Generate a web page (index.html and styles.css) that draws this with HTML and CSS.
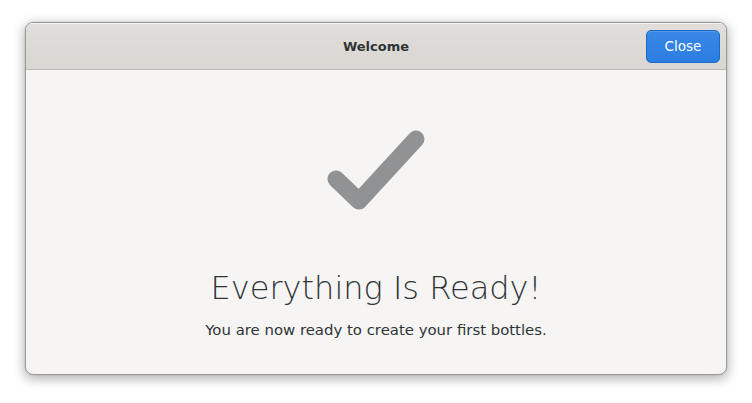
FILE: index.html
```html
<!DOCTYPE html>
<html>
<head>
<meta charset="utf-8">
<link rel="stylesheet" href="styles.css">
</head>
<body>
<div class="window">
  <header class="headerbar">
    <div class="spacer"></div>
    <div class="title">Welcome</div>
    <div class="actions"><button class="btn-close">Close</button></div>
  </header>
  <main class="content">
    <svg class="check" width="110" height="90" viewBox="0 0 110 90">
      <polyline points="16,53 39,75 96,13" fill="none" stroke="#919294" stroke-width="17" stroke-linecap="round" stroke-linejoin="round"/>
    </svg>
    <h1 class="heading">Everything Is Ready!</h1>
    <p class="subtitle">You are now ready to create your first bottles.</p>
  </main>
</div>
</body>
</html>
```
FILE: styles.css
```css
html, body {
  margin: 0;
  padding: 0;
  background: #ffffff;
  width: 752px;
  height: 403px;
  overflow: hidden;
}
body {
  padding: 22px 25px 0 25px;
  box-sizing: border-box;
  font-family: "DejaVu Sans", sans-serif;
}
.window {
  width: 702px;
  height: 353px;
  box-sizing: border-box;
  border: 1px solid #9a9996;
  border-radius: 8px;
  background: #f6f5f4;
  overflow: hidden;
  display: flex;
  flex-direction: column;
  box-shadow: 0 3px 12px 1px rgba(0,0,0,0.3), 0 0 0 1px rgba(0,0,0,0.04);
}
.headerbar {
  height: 47px;
  box-sizing: border-box;
  background: linear-gradient(to bottom, #e1dedb, #dad6d2);
  border-bottom: 1px solid #bfb8b1;
  box-shadow: inset 0 1px #f4f3f2;
  display: flex;
  align-items: center;
  padding: 0 6px;
}
.spacer, .actions {
  flex: 1;
  display: flex;
  justify-content: flex-end;
}
.title {
  font-weight: bold;
  font-size: 13px;
  color: #2e3436;
}
.btn-close {
  width: 74px;
  height: 33px;
  border-radius: 5px;
  border: 1px solid #1b6acb;
  background: linear-gradient(to bottom, #3987e5, #2a7de1);
  color: #ffffff;
  font-family: "DejaVu Sans", sans-serif;
  font-size: 13.5px;
  padding: 0;
  box-shadow: inset 0 1px rgba(255,255,255,0.15);
}
.content {
  flex: 1;
  display: flex;
  flex-direction: column;
  align-items: center;
}
.check {
  margin-top: 56px;
  margin-left: -2px;
}
.heading {
  margin: 52px 0 0 0;
  font-weight: 200;
  font-size: 32px;
  line-height: 40px;
  color: #2e3436;
  letter-spacing: 0;
}
.subtitle {
  margin: 13px 0 0 0;
  font-size: 14.9px;
  color: #2e3436;
}
```
